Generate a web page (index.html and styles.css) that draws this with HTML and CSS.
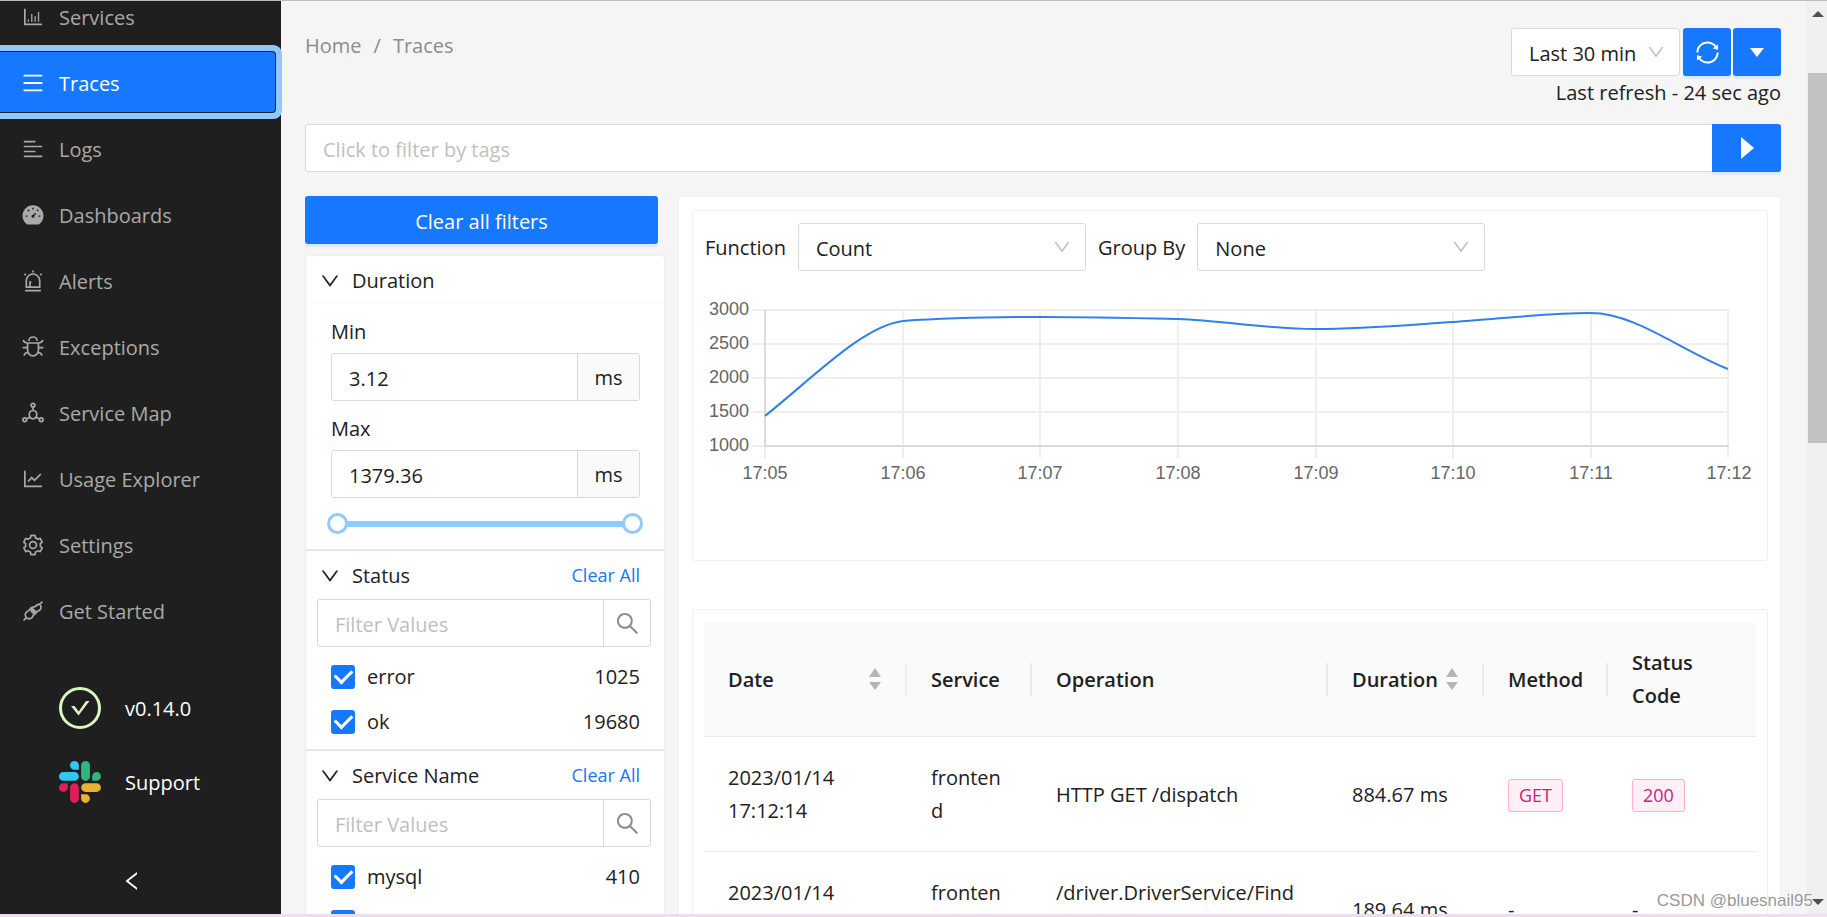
FILE: index.html
```html
<!DOCTYPE html>
<html lang="en">
<head>
<meta charset="utf-8">
<title>Traces</title>
<link rel="stylesheet" href="styles.css">
</head>
<body>
<svg class="defs" aria-hidden="true">
  <symbol id="down" viewBox="0 0 1024 1024"><path d="M884 256h-75c-5.1 0-9.9 2.5-12.9 6.6L512 654.2 227.9 262.6c-3-4.1-7.8-6.6-12.9-6.6h-75c-6.5 0-10.3 7.4-6.5 12.7l352.6 486.1c12.8 17.6 39 17.6 51.7 0l352.6-486.1c3.9-5.3.1-12.7-6.4-12.7z"/></symbol>
  <symbol id="search" viewBox="0 0 1024 1024"><path d="M909.6 854.5L649.9 594.8C690.2 542.7 712 479 712 412c0-80.2-31.3-155.4-87.9-212.1-56.6-56.7-132-87.9-212.1-87.9s-155.5 31.3-212.1 87.9C143.2 256.5 112 331.8 112 412c0 80.1 31.3 155.5 87.9 212.1C256.5 680.8 331.8 712 412 712c67 0 130.6-21.8 182.7-62l259.7 259.6a8.2 8.2 0 0011.6 0l43.6-43.5a8.2 8.2 0 000-11.6zM570.4 570.4C528 612.7 471.8 636 412 636s-116-23.3-158.4-65.6C211.3 528 188 471.8 188 412s23.3-116.1 65.6-158.4C296 211.3 352.2 188 412 188s116.1 23.2 158.4 65.6S636 352.2 636 412s-23.3 116.1-65.6 158.4z"/></symbol>
  <symbol id="sort" viewBox="0 0 12 22"><path d="M6 0l6 9H0zM6 22l6-8H0z"/></symbol>
</svg>
<div class="app">
  <aside class="sidebar">
    <nav class="menu">
      <a class="item" href="#"><svg class="icon" viewBox="0 0 1024 1024"><path d="M888 792H200V168c0-4.400-3.600-8-8-8h-56c-4.400 0-8 3.600-8 8v688c0 4.400 3.600 8 8 8h752c4.400 0 8-3.600 8-8v-56c0-4.400-3.600-8-8-8zM288 604h56v108h-56zM432 384h56v328h-56zM576 475h56v237h-56zM720 300h56v412h-56z"/></svg>Services</a>
      <a class="item active" href="#"><svg class="icon" viewBox="0 0 1024 1024"><path d="M112 160h800v76H112zM112 474h800v76H112zM112 788h800v76H112z"/></svg>Traces</a>
      <a class="item" href="#"><svg class="icon" viewBox="0 0 1024 1024"><path d="M120 160h496v72H120zM120 370h784v72H120zM120 582h496v72H120zM120 792h784v72H120z"/></svg>Logs</a>
      <a class="item" href="#"><svg class="icon" viewBox="0 0 1024 1024"><path d="M250 905A448 448 0 1 1 774 905Q762 912 740 912H284Q262 912 250 905z"/><g class="cut"><path d="M512 200v80M290 292l56 56M734 292l-48 48M200 560h80M744 560h80M500 570l130-130"/><circle cx="510" cy="560" r="34"/></g></svg>Dashboards</a>
      <a class="item" href="#"><svg class="icon line" viewBox="0 0 1024 1024"><path d="M226 776V500a286 286 0 0 1 572 0v276zM176 920h672M512 64v90M144 206l58 58M880 206l-58 58M384 770V560h60"/></svg>Alerts</a>
      <a class="item" href="#"><svg class="icon line" viewBox="0 0 1024 1024"><path d="M280 340h464v290a232 260 0 0 1-464 0zM336 260a176 176 0 0 1 352 0M90 220q50 120 190 120M934 220q-50 120-190 120M70 542h210M744 542h210M130 884q20-120 170-140M894 884q-20-120-170-140"/></svg>Exceptions</a>
      <a class="item" href="#"><svg class="icon line" viewBox="0 0 1024 1024"><circle cx="512" cy="176" r="78"/><circle cx="160" cy="800" r="78"/><circle cx="864" cy="800" r="78"/><path d="M512 254v150M230 765l120-65M794 765l-120-65M512 404c110 0 170 90 160 180-10 110-80 176-160 176s-150-66-160-176c-10-90 50-180 160-180z"/></svg>Service Map</a>
      <a class="item" href="#"><svg class="icon" viewBox="0 0 1024 1024"><path d="M888 792H200V168c0-4.400-3.600-8-8-8h-56c-4.400 0-8 3.600-8 8v688c0 4.400 3.600 8 8 8h752c4.400 0 8-3.600 8-8v-56c0-4.400-3.600-8-8-8z"/><path class="stroke" d="M300 620l160-170 116 118 266-260"/></svg>Usage Explorer</a>
      <a class="item" href="#"><svg class="icon line" viewBox="0 0 1024 1024"><circle cx="512" cy="512" r="146"/><path d="M900 634l-75-64c4-38 4-78 0-116l75-64c-18-60-46-112-88-160l-96 34c-32-24-62-42-98-56l-18-98c-60-12-118-12-178 0l-18 98c-36 14-68 32-98 56l-96-34c-42 48-70 100-88 160l76 64c-4 38-4 78 0 116l-76 64c18 60 46 112 88 160l96-34c30 24 62 42 98 56l18 98c60 12 118 12 178 0l18-98c36-14 66-32 98-56l96 34c42-48 70-100 88-158z"/></svg>Settings</a>
      <a class="item" href="#"><svg class="icon line" viewBox="0 0 1024 1024"><path d="M110 914l120-120M914 110L794 230M400 420l204 204-90 90a170 170 0 0 1-284 80a170 170 0 0 1 80-284zM624 310a160 160 0 0 1 170-80a160 160 0 0 1-80 284l-60 60-204-204zM480 500l-60 60M540 560l-60 60"/></svg>Get Started</a>
    </nav>
    <div class="extras">
      <a class="extra" href="#"><svg class="badge-icon" viewBox="0 0 42 42"><circle cx="21" cy="21" r="19.500" fill="none" stroke="#d9f7be" stroke-width="3"/><path d="M12 19h3.500l4.200 5.500L27 14h3.500L19.500 28.500z" fill="#d9f7be"/></svg>v0.14.0</a>
      <a class="extra" href="#"><svg class="badge-icon" viewBox="0 0 122.800 122.800"><path fill="#e01e5a" d="M25.800 77.600c0 7.100-5.800 12.900-12.900 12.900S0 84.700 0 77.600s5.800-12.900 12.900-12.900h12.900v12.900zm6.500 0c0-7.100 5.800-12.900 12.900-12.900s12.900 5.800 12.900 12.900v32.300c0 7.100-5.800 12.900-12.900 12.900s-12.900-5.800-12.900-12.900V77.600z"/><path fill="#36c5f0" d="M45.200 25.800c-7.100 0-12.900-5.800-12.900-12.900S38.100 0 45.200 0s12.900 5.800 12.900 12.900v12.900H45.200zm0 6.500c7.100 0 12.900 5.800 12.900 12.900s-5.800 12.900-12.900 12.900H12.900C5.800 58.100 0 52.300 0 45.200s5.800-12.900 12.900-12.900h32.300z"/><path fill="#2eb67d" d="M97 45.200c0-7.100 5.800-12.900 12.900-12.900s12.900 5.800 12.900 12.900-5.800 12.900-12.900 12.900H97V45.200zm-6.500 0c0 7.100-5.800 12.900-12.900 12.900s-12.900-5.800-12.900-12.900V12.900C64.700 5.800 70.500 0 77.600 0s12.900 5.800 12.900 12.900v32.300z"/><path fill="#ecb22e" d="M77.600 97c7.100 0 12.900 5.800 12.900 12.900s-5.800 12.900-12.900 12.900-12.900-5.800-12.900-12.900V97h12.900zm0-6.500c-7.100 0-12.900-5.800-12.900-12.900s5.800-12.900 12.900-12.900h32.300c7.100 0 12.900 5.800 12.900 12.900s-5.800 12.900-12.900 12.900H77.600z"/></svg>Support</a>
    </div>
    <button class="collapse" aria-label="Collapse sidebar"><svg viewBox="0 0 1024 1024"><path d="M724 218.300V141c0-6.700-7.700-10.400-12.900-6.300L260.300 486.800a31.860 31.860 0 000 50.300l450.800 352.100c5.300 4.100 12.900.4 12.900-6.300v-77.300c0-4.900-2.300-9.600-6.100-12.600l-360-281 360-281.100c3.800-3 6.100-7.700 6.100-12.600z"/></svg></button>
  </aside>

  <main class="main">
    <header class="topbar">
      <nav class="crumbs"><a href="#">Home</a><span>/</span><a href="#">Traces</a></nav>
      <div class="time">
        <div class="time-controls">
          <div class="select range"><select aria-label="Time range"><option>Last 30 min</option></select><svg class="caret"><use href="#down"/></svg></div>
          <div class="buttons">
            <button class="primary square" aria-label="Refresh"><svg class="sync" viewBox="0 0 1024 1024"><path d="M168 504.200c1-43.700 10-86.100 26.900-126 17.300-41 42.100-77.700 73.700-109.400S337 212.300 378 195c42.400-17.900 87.400-27 133.900-27s91.500 9.100 133.800 27A341.500 341.500 0 01755 268.800c9.900 9.900 19.200 20.400 27.800 31.400l-60.200 47a8 8 0 003 14.100l175.700 43c5 1.200 9.900-2.600 9.900-7.700l.8-180.900c0-6.700-7.700-10.500-12.900-6.300l-56.400 44.100C765.800 155.100 646.200 92 511.800 92 282.700 92 96.300 275.600 92 503.800a8 8 0 008 8.200h60c4.400 0 7.900-3.500 8-7.800zm756 7.800h-60c-4.400 0-7.900 3.500-8 7.800-1 43.700-10 86.100-26.900 126-17.300 41-42.100 77.800-73.700 109.400A342.450 342.450 0 01512.100 856a342.240 342.240 0 01-243.200-100.800c-9.900-9.900-19.200-20.400-27.800-31.400l60.200-47a8 8 0 00-3-14.100l-175.700-43c-5-1.200-9.900 2.600-9.900 7.700l-.7 181c0 6.700 7.700 10.500 12.900 6.300l56.400-44.100C258.200 868.900 377.800 932 512.200 932c229.200 0 415.500-183.700 419.800-411.800a8 8 0 00-8-8.200z"/></svg></button>
            <button class="primary square" aria-label="Auto refresh options"><svg class="tri" viewBox="0 0 16 16"><path d="M1 4h14L8 13z"/></svg></button>
          </div>
        </div>
        <div class="refreshed">Last refresh - 24 sec ago</div>
      </div>
    </header>

    <form class="tagbar">
      <input type="text" aria-label="Filter by tags" placeholder="Click to filter by tags">
      <button class="primary run" type="button" aria-label="Run query"><svg viewBox="0 0 24 24"><path d="M6 1l13 11L6 23z"/></svg></button>
    </form>

    <div class="columns">
      <section class="filters">
        <button class="primary clear">Clear all filters</button>
        <div class="panel">
          <div class="group">
            <div class="group-head"><svg class="chev"><use href="#down"/></svg><span class="group-name">Duration</span></div>
            <div class="duration">
              <label for="min">Min</label>
              <div class="field"><input id="min" type="text" value="3.12"><span class="addon">ms</span></div>
              <label for="max">Max</label>
              <div class="field"><input id="max" type="text" value="1379.36"><span class="addon">ms</span></div>
              <div class="slider">
                <input type="range" aria-label="Minimum duration" min="0" max="100" value="0">
                <input type="range" aria-label="Maximum duration" min="0" max="100" value="100">
              </div>
            </div>
          </div>
          <div class="group">
            <div class="group-head"><svg class="chev"><use href="#down"/></svg><span class="group-name">Status</span><button class="link">Clear All</button></div>
            <div class="finder"><input type="text" aria-label="Filter status values" placeholder="Filter Values"><button aria-label="Search"><svg><use href="#search"/></svg></button></div>
            <div class="checks">
              <label class="check"><input type="checkbox" checked><span>error</span><span class="count">1025</span></label>
              <label class="check"><input type="checkbox" checked><span>ok</span><span class="count">19680</span></label>
            </div>
          </div>
          <div class="group">
            <div class="group-head"><svg class="chev"><use href="#down"/></svg><span class="group-name">Service Name</span><button class="link">Clear All</button></div>
            <div class="finder"><input type="text" aria-label="Filter service names" placeholder="Filter Values"><button aria-label="Search"><svg><use href="#search"/></svg></button></div>
            <div class="checks">
              <label class="check"><input type="checkbox" checked><span>mysql</span><span class="count">410</span></label>
              <label class="check"><input type="checkbox" checked><span>driver</span></label>
            </div>
          </div>
        </div>
      </section>

      <section class="results">
        <div class="card chart-card">
          <div class="controls">
            <label for="fn">Function</label>
            <div class="select"><select id="fn"><option>Count</option></select><svg class="caret"><use href="#down"/></svg></div>
            <label for="grp">Group By</label>
            <div class="select"><select id="grp"><option>None</option></select><svg class="caret"><use href="#down"/></svg></div>
          </div>
          <svg class="chart" viewBox="0 0 1052 200" role="img" aria-label="Span count over time">
            <path class="grid" d="M49 20H1025M49 54H1025M49 88H1025M49 122H1025M199 20V168M336 20V168M474 20V168M612 20V168M749 20V168M887 20V168M1024 20V168M61 156V168M49 156H61"/>
            <path class="axis" d="M61 20V156H1025"/>
            <path class="series" d="M61 126C111 86 159 36 199 31C240 28 290 27 336 27C382 27 428 28 474 29C520 31 566 39 612 39C658 39 703 35 749 32C795 29 841 23 887 23C931 23 976 60 1024 79"/>
            <g class="ylabels"><text x="45" y="25">3000</text><text x="45" y="59">2500</text><text x="45" y="93">2000</text><text x="45" y="127">1500</text><text x="45" y="161">1000</text></g>
            <g class="xlabels"><text x="61" y="189">17:05</text><text x="199" y="189">17:06</text><text x="336" y="189">17:07</text><text x="474" y="189">17:08</text><text x="612" y="189">17:09</text><text x="749" y="189">17:10</text><text x="887" y="189">17:11</text><text x="1025" y="189">17:12</text></g>
          </svg>
        </div>
        <div class="card">
          <table>
            <colgroup><col class="c-date"><col class="c-service"><col class="c-op"><col class="c-dur"><col class="c-method"><col class="c-code"></colgroup>
            <thead><tr>
              <th><div class="sorter"><span>Date</span><svg><use href="#sort"/></svg></div></th>
              <th>Service</th><th>Operation</th>
              <th><div class="sorter"><span>Duration</span><svg><use href="#sort"/></svg></div></th>
              <th>Method</th><th>Status Code</th>
            </tr></thead>
            <tbody>
              <tr><td>2023/01/14 17:12:14</td><td class="break">frontend</td><td>HTTP GET /dispatch</td><td>884.67 ms</td><td><span class="tag">GET</span></td><td><span class="tag">200</span></td></tr>
              <tr><td>2023/01/14 17:12:14</td><td class="break">frontend</td><td>/driver.DriverService/Find<wbr>Nearest</td><td>189.64 ms</td><td>-</td><td>-</td></tr>
            </tbody>
          </table>
        </div>
      </section>
    </div>
  </main>

  <div class="scrollbar" aria-hidden="true">
    <svg viewBox="0 0 12 6"><path d="M6 0l6 6H0z"/></svg>
    <div class="thumb"></div>
    <svg viewBox="0 0 12 6"><path d="M0 0h12L6 6z"/></svg>
  </div>
</div>
<div class="watermark">CSDN @bluesnail95</div>
</body>
</html>
```

FILE: styles.css
```css
* { box-sizing: border-box; }
body {
  margin: 0;
  height: 100vh;
  overflow: hidden;
  font-family: "Segoe UI", "Open Sans", "Noto Sans", sans-serif;
  font-size: 20px;
  line-height: 33px;
  color: #212121;
  background: #f5f5f5;
}
input, button, select { font: inherit; color: inherit; margin: 0; }
button { cursor: pointer; padding: 0; border: 0; background: none; }
a { color: inherit; text-decoration: none; }
.defs { position: absolute; width: 0; height: 0; }
.app {
  display: flex;
  height: 100vh;
  border-top: 1px solid #bdbdbd;
  border-bottom: 3px solid #efdcec;
}

.sidebar {
  display: flex;
  flex-direction: column;
  flex: 0 0 281px;
  background: #1f1f1f;
  color: #a9a9a9;
  position: relative;
  z-index: 1;
}
.menu { display: flex; flex-direction: column; gap: 6px; margin-top: -15px; }
.item {
  display: flex;
  align-items: center;
  gap: 14px;
  height: 60px;
  padding: 2px 0 0 21px;
  margin-right: 6px;
}
.active {
  background: #1677ff;
  color: #fff;
  border-radius: 0 3px 3px 0;
  box-shadow: 0 0 0 1px #14213a, 0 0 0 7px #8fc8ff;
}
.icon { width: 24px; height: 24px; fill: currentColor; flex: none; }
.line { fill: none; stroke: currentColor; stroke-width: 72; }
.stroke { fill: none; stroke: currentColor; stroke-width: 72; }
.cut { stroke: #1f1f1f; stroke-width: 60; fill: #1f1f1f; }
.extras { display: flex; flex-direction: column; gap: 32px; padding: 47px 0 0 59px; color: #fff; }
.extra { display: flex; align-items: center; gap: 24px; height: 42px; }
.badge-icon { width: 42px; height: 42px; }
.collapse { margin-top: auto; height: 66px; padding-right: 18px; }
.collapse svg { width: 24px; height: 24px; fill: #fff; display: block; margin: 0 auto; }

.main { flex: 1; min-width: 0; padding: 27px 25px 0 24px; overflow: hidden; }
.topbar { display: flex; justify-content: space-between; }
.crumbs { display: flex; gap: 12px; color: #8c8c8c; line-height: 36px; }
.time { text-align: right; }
.time-controls { display: flex; justify-content: flex-end; gap: 3px; }
.buttons { display: flex; gap: 2px; }
.primary {
  display: flex;
  align-items: center;
  justify-content: center;
  height: 48px;
  background: #1677ff;
  color: #fff;
  fill: #fff;
  border-radius: 3px;
  box-shadow: 0 3px 0 #dce9f7;
}
.square { width: 48px; }
.sync { width: 27px; height: 27px; }
.tri { width: 16px; height: 16px; }
.select { position: relative; width: 288px; height: 48px; }
.select select {
  appearance: none;
  width: 100%;
  height: 48px;
  padding: 2px 40px 0 17px;
  border: 1px solid #d9d9d9;
  border-radius: 3px;
  background: #fff;
}
.range { width: 169px; }
.caret {
  position: absolute;
  right: 14px;
  top: 14px;
  width: 20px;
  height: 20px;
  fill: #bfbfbf;
  pointer-events: none;
}
.refreshed { line-height: 34px; }

.tagbar { display: flex; margin: 14px 0 24px; }
.tagbar input {
  flex: 1;
  min-width: 0;
  height: 48px;
  padding: 2px 17px 0;
  border: 1px solid #d9d9d9;
  border-right: 0;
  border-radius: 3px 0 0 3px;
  background: #fff;
}
::placeholder { color: #bfbfbf; opacity: 1; }
.run { width: 69px; border-radius: 0 3px 3px 0; }
.run svg { width: 24px; height: 24px; }

.columns { display: flex; gap: 14px; align-items: flex-start; }
.filters { flex: 0 0 359px; min-width: 0; }
.clear { width: 353px; padding-top: 2px; }
.panel {
  margin: 12px 0 0 1px;
  background: #fff;
  border-radius: 3px;
  box-shadow: 0 0 2px #e0e0e0;
}
.group { border-bottom: 2px solid #e8e8e8; }
.group-head {
  display: flex;
  align-items: center;
  height: 48px;
  padding: 2px 24px 0 13px;
  border-bottom: 1px solid #fafafa;
}
.chev { width: 22px; height: 22px; fill: #212121; margin-right: 11px; }
.group-name { flex: 1; }
.link { color: #1677ff; font-size: 18px; }
.duration { padding: 0 24px 15px 25px; }
.duration label { display: block; line-height: 30px; margin: 13px 0 6px; }
.field { display: flex; height: 48px; border: 1px solid #d9d9d9; border-radius: 3px; }
.field input { flex: 1; min-width: 0; padding: 2px 17px 0; border: 0; background: none; }
.addon {
  width: 62px;
  text-align: center;
  line-height: 47px;
  background: #fafafa;
  border-left: 1px solid #d9d9d9;
}
.slider {
  display: grid;
  height: 21px;
  margin: 15px -3px 0 -4px;
  background: linear-gradient(#91caff, #91caff) center / calc(100% - 20px) 6px no-repeat;
}
.slider input {
  grid-area: 1 / 1;
  appearance: none;
  width: 100%;
  min-width: 0;
  height: 21px;
  background: none;
  pointer-events: none;
}
.slider input::-webkit-slider-thumb {
  appearance: none;
  width: 21px;
  height: 21px;
  border: 3px solid #91caff;
  border-radius: 50%;
  background: #fff;
  pointer-events: auto;
}
.finder {
  display: flex;
  height: 48px;
  margin: 0 13px 0 11px;
  border: 1px solid #d9d9d9;
  border-radius: 3px;
}
.finder input { flex: 1; min-width: 0; padding: 2px 17px 0; border: 0; background: none; }
.finder button { width: 47px; border-left: 1px solid #d9d9d9; }
.finder svg { width: 27px; height: 27px; fill: #8c8c8c; display: block; margin: 0 auto; }
.checks { padding: 7px 24px 5px 25px; }
.check { display: flex; align-items: center; gap: 12px; height: 45px; }
.check input {
  appearance: none;
  display: grid;
  place-items: center;
  width: 24px;
  height: 24px;
  border-radius: 3px;
  background: #1677ff;
}
.check input::after {
  content: "";
  width: 8px;
  height: 14px;
  margin-bottom: 4px;
  border: solid #fff;
  border-width: 0 3px 3px 0;
  transform: rotate(45deg);
}
.count { margin-left: auto; }

.results {
  flex: 1;
  min-width: 0;
  padding: 13px 12px 13px 13px;
  background: #fff;
  border: 1px solid #f0f0f0;
  border-radius: 3px;
}
.card { padding: 12px 11px; border: 1px solid #f0f0f0; border-radius: 3px; }
.chart-card { padding-bottom: 70px; margin-bottom: 48px; }
.controls { display: flex; align-items: center; gap: 12px; padding-left: 1px; }
.chart { display: block; width: 100%; margin-top: 19px; font-family: "Liberation Sans", Arial, sans-serif; font-size: 18px; }
.chart path { fill: none; stroke-width: 2; }
.grid { stroke: #eeeef1; }
.axis { stroke: #dadadd; }
.chart .series { stroke: #2f80ed; stroke-width: 2; }
.ylabels { text-anchor: end; fill: #666; }
.xlabels { text-anchor: middle; fill: #666; }

table { width: 100%; table-layout: fixed; border-collapse: separate; border-spacing: 0; }
.c-date { width: 203px; }
.c-service { width: 125px; }
.c-dur { width: 156px; }
.c-method { width: 124px; }
.c-code { width: 148px; }
th, td { padding: 24px; text-align: left; border-bottom: 1px solid #ececec; }
th {
  padding-right: 20px;
  font-weight: 600;
  background: linear-gradient(#ebebeb, #ebebeb) right center / 2px 33px no-repeat #fafafa;
}
th:last-child { background: #fafafa; padding-right: 48px; }
.sorter { display: flex; align-items: center; justify-content: space-between; padding-right: 6px; }
.sorter svg { width: 12px; height: 22px; fill: #b5b5b5; flex: none; }
.break { word-break: break-all; }
.tag {
  display: inline-block;
  vertical-align: middle;
  padding: 0 10px;
  font-size: 18px;
  line-height: 31px;
  color: #c41d7f;
  background: #fff0f6;
  border: 1px solid #ffadd2;
  border-radius: 3px;
}

.scrollbar {
  flex: 0 0 21px;
  display: flex;
  flex-direction: column;
  align-items: center;
  background: #f0f0f0;
  padding: 10px 0 9px 2px;
}
.scrollbar svg { width: 12px; height: 6px; fill: #505050; }
.thumb { width: 19px; height: 370px; margin: 56px 0 auto; background: #c1c1c1; }
.watermark {
  position: absolute;
  right: 14px;
  bottom: 4px;
  font: 17px/24px "Liberation Sans", Arial, sans-serif;
  color: #999;
  text-shadow: 1px 1px 0 #fff;
}
```
